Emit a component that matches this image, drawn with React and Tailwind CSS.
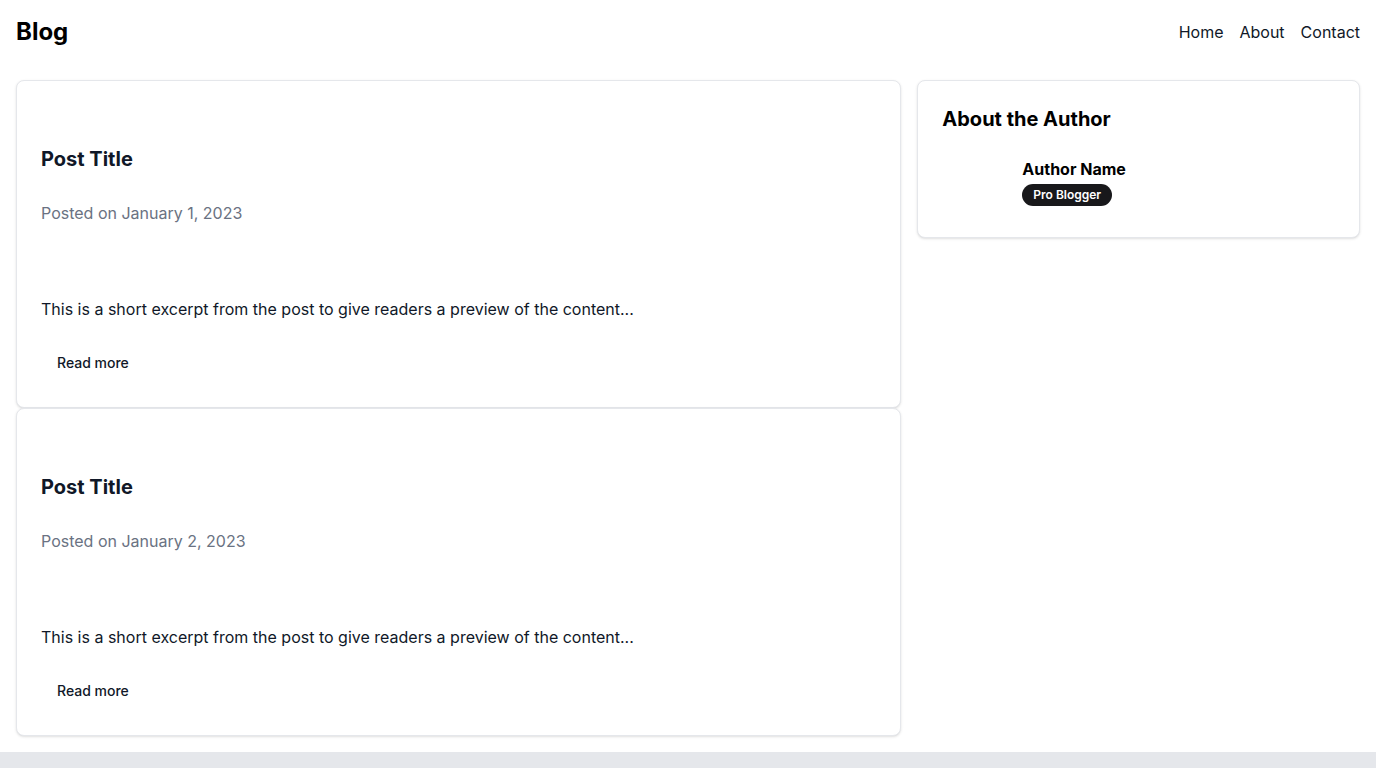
export default function App() {
  const posts = [
    { date: "January 1, 2023" },
    { date: "January 2, 2023" },
  ];
  return (
    <div className="min-h-screen bg-white text-gray-900" style={{ fontFamily: "Inter, 'Noto Sans', sans-serif" }}>
      <header className="flex items-center justify-between px-4 py-4">
        <h1 className="text-2xl font-bold text-black">Blog</h1>
        <nav className="flex gap-4 text-base text-gray-900">
          <a href="#">Home</a>
          <a href="#">About</a>
          <a href="#">Contact</a>
        </nav>
      </header>
      <main className="grid grid-cols-[2fr_1fr] gap-4 p-4">
        <div className="flex flex-col">
          {posts.map((p, i) => (
            <article key={i} className="rounded-lg border border-gray-200 bg-white p-6 shadow-sm">
              <h2 className="pt-10 text-xl font-bold leading-7 text-gray-900">Post Title</h2>
              <p className="mt-7 text-base leading-6 text-gray-500">Posted on {p.date}</p>
              <p className="mt-[72px] text-base leading-6 text-gray-900">
                This is a short excerpt from the post to give readers a preview of the content...
              </p>
              <button className="mt-[22px] block h-10 px-4 text-sm font-medium text-gray-900">Read more</button>
            </article>
          ))}
        </div>
        <aside className="self-start rounded-lg border border-gray-200 bg-white p-6 shadow-sm">
          <h2 className="text-xl font-bold leading-7 text-black">About the Author</h2>
          <div className="mt-4 flex items-center gap-4">
            <div className="h-16 w-16 shrink-0 rounded-full"></div>
            <div className="flex flex-col items-start">
              <span className="text-base font-bold leading-6 text-black">Author Name</span>
              <span className="mt-[3px] rounded-full bg-[#18181b] px-[11px] py-[3px] text-xs font-semibold leading-4 text-white">
                Pro Blogger
              </span>
            </div>
          </div>
        </aside>
      </main>
      <footer className="h-16 bg-gray-200"></footer>
    </div>
  );
}
